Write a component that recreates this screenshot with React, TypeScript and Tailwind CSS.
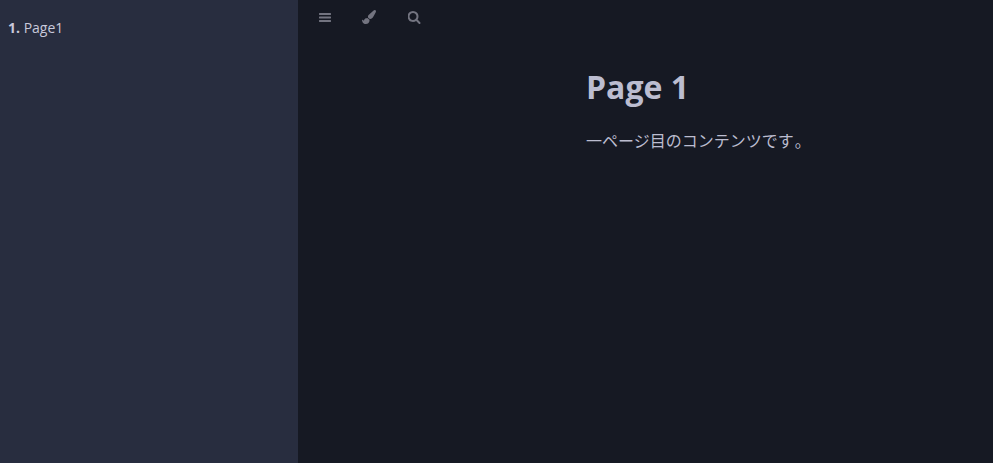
const paths = {
  bars: "M1536 1216v128q0 26-19 45t-45 19H64q-26 0-45-19t-19-45v-128q0-26 19-45t45-19h1408q26 0 45 19t19 45zM1536 768v128q0 26-19 45t-45 19H64q-26 0-45-19T0 896V768q0-26 19-45t45-19h1408q26 0 45 19t19 45zM1536 320v128q0 26-19 45t-45 19H64q-26 0-45-19T0 448V320q0-26 19-45t45-19h1408q26 0 45 19t19 45z",
  brush:
    "M1615 0q70 0 122.500 46.500t52.500 116.500q0 63-45 151-332 629-465 752-97 91-218 91-126 0-216.500-92.500t-90.500-219.500q0-128 92-212l638-579q59-54 130-54zm-909 1034q39 76 106.500 130t150.500 76l1 71q4 213-129.500 347t-348.500 134q-123 0-218-46.500t-152.500-127.500-86.500-183-29-220q7 5 41 30t62 44.500 59 36.500 46 17q41 0 55-37 25-66 57.500-112.500t69.500-76 88-47.500 103-25.500 125-10.500z",
  search:
    "M1152 832q0-185-131.500-316.500t-316.500-131.500-316.500 131.500-131.500 316.500 131.500 316.500 316.500 131.500 316.500-131.500 131.500-316.500zm512 832q0 52-38 90t-90 38q-54 0-90-38l-343-342q-179 124-399 124-143 0-273.500-55.500t-225-150-150-225-55.500-273.500 55.500-273.500 150-225 225-150 273.500-55.500 273.500 55.500 225 150 150 225 55.500 273.500q0 220-124 399l343 343q37 37 37 90z",
};

function Icon({ d, label, className, viewBox = "0 0 1792 1792" }: { d: string; label: string; className: string; viewBox?: string }) {
  return (
    <button type="button" aria-label={label} className={className}>
      <svg viewBox={viewBox} className="size-[14px] fill-current">
        <path d={d} />
      </svg>
    </button>
  );
}

export default function App() {
  return (
    <div className="flex h-[463px] w-full overflow-hidden bg-[#161923] font-['Open_Sans','Noto_Sans_CJK_JP',sans-serif] text-[#bcbdd0]">
      <nav className="w-[298px] shrink-0 bg-[#282d3f] px-2 pt-[18px] text-sm leading-5 text-[#c8c9db]">
        <strong>1.</strong> Page1
      </nav>
      <div className="flex-1">
        <header className="flex h-[50px] items-start pl-[21px] text-[#737480]">
          <Icon label="Contents" d={paths.bars} className="mt-[11px]" />
          <Icon label="Theme" d={paths.brush} className="ml-[29px] mt-[10px]" />
          <Icon label="Search" d={paths.search} viewBox="64 0 1792 1792" className="ml-8 mt-[10px]" />
        </header>
        <main className="pl-[288px] pt-[14px]">
          <h1 className="text-[32px] font-bold leading-[46px]">Page 1</h1>
          <p className="mt-[18px] text-base leading-[27px]">
            一ページ目のコンテンツです<span className="ml-px">。</span>
          </p>
        </main>
      </div>
    </div>
  );
}
